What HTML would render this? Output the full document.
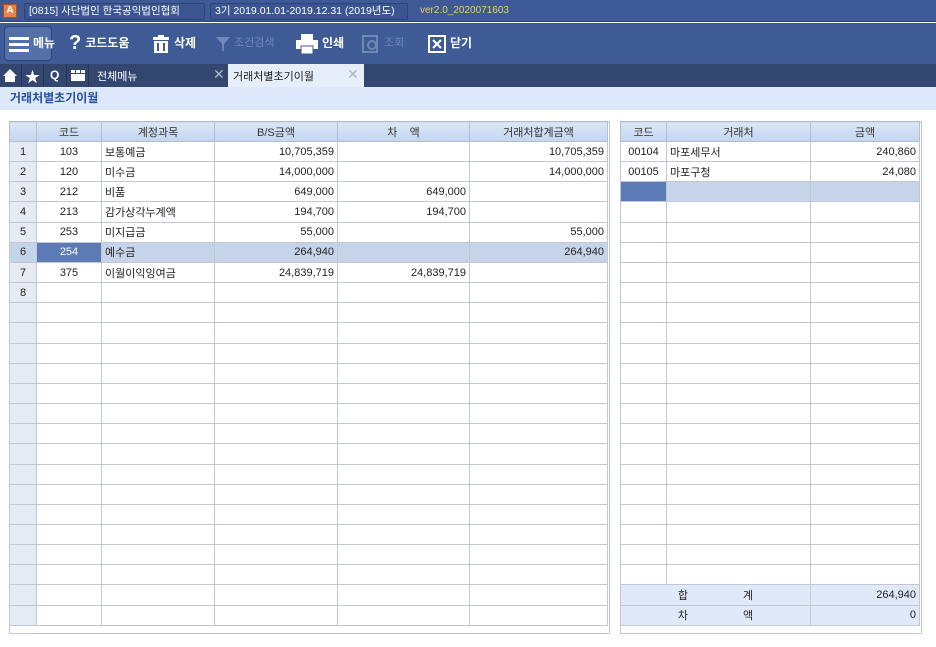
<!DOCTYPE html>
<html><head><meta charset="utf-8"><style>
*{margin:0;padding:0;box-sizing:border-box}
body{width:936px;height:647px;background:#fff;font-family:"Liberation Sans","Noto Sans CJK KR",sans-serif;font-size:11px;color:#222;position:relative;overflow:hidden}
.abs{position:absolute}
#title{left:0;top:0;width:936px;height:22px;background:#3e5a96;border-bottom:1px solid #2a4270}
.tb{position:absolute;top:3px;height:17px;border:1px solid #2c4476;border-radius:2px;color:#fff;font-size:10.5px;line-height:15px;padding:0 4px;background:#3a5590;white-space:nowrap;overflow:hidden}
#tool{left:0;top:23px;width:936px;height:41px;background:#3f5b96}
.btn{position:absolute;top:0;height:41px;color:#fff;font-weight:bold;font-size:12px;line-height:41px;display:flex;align-items:center;gap:4px}
#tabs{left:0;top:64px;width:936px;height:23px;background:#324670}
#sub{left:0;top:87px;width:936px;height:23px;background:#dde8fb;color:#2850a0;font-weight:bold;font-size:12px;line-height:23px;padding-left:10px}
table{border-collapse:collapse;table-layout:fixed;position:absolute}
td{border:1px solid #c3c7d3;height:20.17px;padding:0 3px;font-size:11px;white-space:nowrap;overflow:hidden}
th{border:1px solid #b5bccc;height:20px;background:linear-gradient(#dbe6f7,#c3d5f0);font-weight:normal;font-size:11px;color:#333}
.n{background:#e6eaf2;text-align:center}
.c{text-align:center}.r{text-align:right}
.sel td{background:#c6d4ea}
.sel td.hi{background:#5c7ab6;color:#fff}
.ft td{background:#dfe9f9}
</style></head><body>
<div id="title" class="abs">
 <div class="abs" style="left:3px;top:4px;width:14px;height:14px;background:#e8834a;border:1px solid #a85020;color:#fff;font-size:10px;line-height:12px;text-align:center;font-weight:bold">A</div>
 <div class="tb" style="left:24px;width:181px">[0815] 사단법인 한국공익법인협회</div>
 <div class="tb" style="left:210px;width:198px">3기 2019.01.01-2019.12.31 (2019년도)</div>
 <div class="abs" style="left:420px;top:5px;color:#e8d060;font-size:10px">ver2.0_2020071603</div>
</div>
<div id="tool" class="abs">
 <div class="abs" style="left:4px;top:3px;width:48px;height:35px;border:1px solid #2c4476;border-radius:4px;background:#5470a8"></div>
 <div class="btn" style="left:9px"><svg width="20" height="16"><rect y="1" width="20" height="3" fill="#fff"/><rect y="7" width="20" height="3" fill="#fff"/><rect y="13" width="20" height="3" fill="#fff"/></svg>메뉴</div>
 <div class="btn" style="left:69px"><span style="font-size:20px">?</span>코드도움</div>
 <div class="btn" style="left:152px"><svg width="18" height="18"><rect x="1" y="2" width="16" height="3" fill="#fff"/><rect x="6" y="0" width="6" height="2" fill="#fff"/><rect x="2" y="6" width="14" height="12" fill="#fff"/><rect x="5" y="8" width="2" height="8" fill="#3f5b96"/><rect x="11" y="8" width="2" height="8" fill="#3f5b96"/></svg>삭제</div>
 <div class="btn" style="left:216px;color:#7088b8;font-weight:normal;font-size:11px"><svg width="14" height="16"><path d="M0 1H14L8 8V16L6 14V8Z" fill="#7088b8"/></svg>조건검색</div>
 <div class="btn" style="left:296px"><svg width="22" height="20"><rect x="5" y="0" width="12" height="6" fill="#fff"/><rect x="0" y="6" width="22" height="9" fill="#fff"/><rect x="5" y="12" width="12" height="8" fill="#fff" stroke="#3f5b96"/></svg>인쇄</div>
 <div class="btn" style="left:362px;color:#7088b8;font-weight:normal;font-size:11px"><svg width="18" height="18"><rect x="1" y="1" width="14" height="16" fill="none" stroke="#7088b8" stroke-width="2"/><circle cx="10" cy="10" r="4" fill="none" stroke="#7088b8" stroke-width="2"/></svg>조회</div>
 <div class="btn" style="left:428px"><svg width="18" height="18"><rect x="1" y="1" width="16" height="16" fill="none" stroke="#fff" stroke-width="2"/><path d="M5 5L13 13M13 5L5 13" stroke="#fff" stroke-width="2"/></svg>닫기</div>
</div>
<div id="tabs" class="abs">
 <svg class="abs" style="left:3px;top:5px" width="14" height="13"><path d="M7 0L14 7H12V13H2V7H0Z" fill="#fff"/></svg>
 <div class="abs" style="left:21px;top:0;width:1px;height:23px;background:#243456"></div>
 <div class="abs" style="left:25px;top:2px;color:#fff;font-size:15px">★</div>
 <div class="abs" style="left:43px;top:0;width:1px;height:23px;background:#243456"></div>
 <div class="abs" style="left:50px;top:4px;color:#fff;font-weight:bold;font-size:12px">Q</div>
 <div class="abs" style="left:66px;top:0;width:1px;height:23px;background:#243456"></div>
 <svg class="abs" style="left:71px;top:6px" width="14" height="11"><rect width="14" height="11" fill="#fff"/><rect x="0" y="3" width="14" height="1" fill="#324670"/><rect x="4" y="0" width="1" height="3" fill="#324670"/><rect x="9" y="0" width="1" height="3" fill="#324670"/></svg>
 <div class="abs" style="left:88px;top:0;width:1px;height:23px;background:#243456"></div>
 <div class="abs" style="left:97px;top:4px;color:#fff;font-size:11px">전체메뉴</div>
 <div class="abs" style="left:213px;top:2px;color:#aab4c8;font-size:14px">✕</div>
 <div class="abs" style="left:228px;top:0;width:136px;height:23px;background:#e6eef9"></div>
 <div class="abs" style="left:233px;top:4px;color:#222;font-size:11px">거래처별초기이월</div>
 <div class="abs" style="left:347px;top:2px;color:#aab4c8;font-size:14px">✕</div>
</div>
<div id="sub" class="abs">거래처별초기이월</div>

<div class="abs" style="left:9px;top:121px;width:601px;height:513px;border:1px solid #c3c7d3"></div>
<table style="left:9px;top:121px;width:598px">
<colgroup><col style="width:27px"><col style="width:65px"><col style="width:113px"><col style="width:123px"><col style="width:132px"><col style="width:138px"></colgroup>
<tr><th></th><th>코드</th><th>계정과목</th><th>B/S금액</th><th>차&nbsp;&nbsp;&nbsp;&nbsp;액</th><th>거래처합계금액</th></tr>
<tr><td class="n">1</td><td class="c">103</td><td>보통예금</td><td class="r">10,705,359</td><td></td><td class="r">10,705,359</td></tr>
<tr><td class="n">2</td><td class="c">120</td><td>미수금</td><td class="r">14,000,000</td><td></td><td class="r">14,000,000</td></tr>
<tr><td class="n">3</td><td class="c">212</td><td>비품</td><td class="r">649,000</td><td class="r">649,000</td><td></td></tr>
<tr><td class="n">4</td><td class="c">213</td><td>감가상각누계액</td><td class="r">194,700</td><td class="r">194,700</td><td></td></tr>
<tr><td class="n">5</td><td class="c">253</td><td>미지급금</td><td class="r">55,000</td><td></td><td class="r">55,000</td></tr>
<tr class="sel"><td class="n">6</td><td class="c hi">254</td><td>예수금</td><td class="r">264,940</td><td></td><td class="r">264,940</td></tr>
<tr><td class="n">7</td><td class="c">375</td><td>이월이익잉여금</td><td class="r">24,839,719</td><td class="r">24,839,719</td><td></td></tr>
<tr><td class="n">8</td><td></td><td></td><td></td><td></td><td></td></tr>
<tr><td class="n"></td><td></td><td></td><td></td><td></td><td></td></tr>
<tr><td class="n"></td><td></td><td></td><td></td><td></td><td></td></tr>
<tr><td class="n"></td><td></td><td></td><td></td><td></td><td></td></tr>
<tr><td class="n"></td><td></td><td></td><td></td><td></td><td></td></tr>
<tr><td class="n"></td><td></td><td></td><td></td><td></td><td></td></tr>
<tr><td class="n"></td><td></td><td></td><td></td><td></td><td></td></tr>
<tr><td class="n"></td><td></td><td></td><td></td><td></td><td></td></tr>
<tr><td class="n"></td><td></td><td></td><td></td><td></td><td></td></tr>
<tr><td class="n"></td><td></td><td></td><td></td><td></td><td></td></tr>
<tr><td class="n"></td><td></td><td></td><td></td><td></td><td></td></tr>
<tr><td class="n"></td><td></td><td></td><td></td><td></td><td></td></tr>
<tr><td class="n"></td><td></td><td></td><td></td><td></td><td></td></tr>
<tr><td class="n"></td><td></td><td></td><td></td><td></td><td></td></tr>
<tr><td class="n"></td><td></td><td></td><td></td><td></td><td></td></tr>
<tr><td class="n"></td><td></td><td></td><td></td><td></td><td></td></tr>
<tr><td class="n"></td><td></td><td></td><td></td><td></td><td></td></tr>
</table>

<div class="abs" style="left:620px;top:121px;width:302px;height:513px;border:1px solid #c3c7d3"></div>
<table style="left:620px;top:121px;width:299px">
<colgroup><col style="width:46px"><col style="width:144px"><col style="width:109px"></colgroup>
<tr><th>코드</th><th>거래처</th><th>금액</th></tr>
<tr><td class="c">00104</td><td>마포세무서</td><td class="r">240,860</td></tr>
<tr><td class="c">00105</td><td>마포구청</td><td class="r">24,080</td></tr>
<tr class="sel"><td class="hi"></td><td></td><td></td></tr>
<tr><td></td><td></td><td></td></tr><tr><td></td><td></td><td></td></tr><tr><td></td><td></td><td></td></tr>
<tr><td></td><td></td><td></td></tr><tr><td></td><td></td><td></td></tr><tr><td></td><td></td><td></td></tr>
<tr><td></td><td></td><td></td></tr><tr><td></td><td></td><td></td></tr><tr><td></td><td></td><td></td></tr>
<tr><td></td><td></td><td></td></tr><tr><td></td><td></td><td></td></tr><tr><td></td><td></td><td></td></tr>
<tr><td></td><td></td><td></td></tr><tr><td></td><td></td><td></td></tr><tr><td></td><td></td><td></td></tr>
<tr><td></td><td></td><td></td></tr><tr><td></td><td></td><td></td></tr><tr><td></td><td></td><td></td></tr>
<tr><td></td><td></td><td></td></tr>
<tr class="ft"><td colspan="2" class="c">합&nbsp;&nbsp;&nbsp;&nbsp;&nbsp;&nbsp;&nbsp;&nbsp;&nbsp;&nbsp;&nbsp;&nbsp;&nbsp;&nbsp;&nbsp;&nbsp;&nbsp;&nbsp;계</td><td class="r">264,940</td></tr>
<tr class="ft"><td colspan="2" class="c">차&nbsp;&nbsp;&nbsp;&nbsp;&nbsp;&nbsp;&nbsp;&nbsp;&nbsp;&nbsp;&nbsp;&nbsp;&nbsp;&nbsp;&nbsp;&nbsp;&nbsp;&nbsp;액</td><td class="r">0</td></tr>
</table>
</body></html>
